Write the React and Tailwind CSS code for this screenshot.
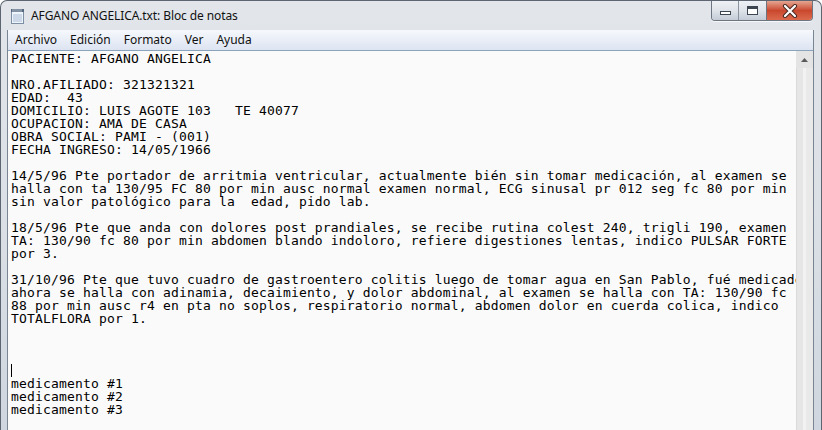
import React from 'react';

const lines = [
  'PACIENTE: AFGANO ANGELICA',
  '',
  'NRO.AFILIADO: 321321321',
  'EDAD:  43',
  'DOMICILIO: LUIS AGOTE 103   TE 40077',
  'OCUPACION: AMA DE CASA',
  'OBRA SOCIAL: PAMI - (001)',
  'FECHA INGRESO: 14/05/1966',
  '',
  '14/5/96 Pte portador de arritmia ventricular, actualmente bién sin tomar medicación, al examen se',
  'halla con ta 130/95 FC 80 por min ausc normal examen normal, ECG sinusal pr 012 seg fc 80 por min',
  'sin valor patológico para la  edad, pido lab.',
  '',
  '18/5/96 Pte que anda con dolores post prandiales, se recibe rutina colest 240, trigli 190, examen',
  'TA: 130/90 fc 80 por min abdomen blando indoloro, refiere digestiones lentas, indico PULSAR FORTE',
  'por 3.',
  '',
  '31/10/96 Pte que tuvo cuadro de gastroentero colitis luego de tomar agua en San Pablo, fué medicado',
  'ahora se halla con adinamia, decaimiento, y dolor abdominal, al examen se halla con TA: 130/90 fc',
  '88 por min ausc r4 en pta no soplos, respiratorio normal, abdomen dolor en cuerda colica, indico',
  'TOTALFLORA por 1.',
  '',
  '',
  '',
];

const after = ['medicamento #1', 'medicamento #2', 'medicamento #3'];

const menus = ['Archivo', 'Edición', 'Formato', 'Ver', 'Ayuda'];

function NotepadIcon() {
  return (
    <svg width="15" height="16" viewBox="0 0 15 16">
      <rect x="1.5" y="2.5" width="12" height="13" fill="#eef4fb" stroke="#7d8fa3" />
      <rect x="1" y="1" width="13" height="3" fill="#55687d" />
      <path d="M3 1v3M5 1v3M7 1v3M9 1v3M11 1v3" stroke="#c9d4e0" strokeWidth="0.8" />
      <path d="M3 7h9M3 9h9M3 11h9M3 13h9" stroke="#a9bcd3" strokeWidth="1" />
    </svg>
  );
}

function CaptionButtons() {
  return (
    <div className="flex h-[20px] mr-[8px] rounded-b-[4px] border border-t-0 border-[#6d7680] overflow-hidden shadow-[0_1px_0_rgba(255,255,255,0.7)]">
      <div className="w-[27px] h-full flex items-end justify-center pb-[5px] bg-gradient-to-b from-[#eef1f5] via-[#dfe4ea] to-[#c4ccd6] border-r border-[#8a939e]">
        <div className="w-[11px] h-[4px] bg-white border border-[#3d4550]" />
      </div>
      <div className="w-[28px] h-full flex items-center justify-center bg-gradient-to-b from-[#eef1f5] via-[#dfe4ea] to-[#c4ccd6] border-r border-[#6d7680]">
        <div className="w-[11px] h-[9px] bg-white border border-[#3d4550] border-t-[3px] mb-[1px]" />
      </div>
      <div className="w-[45px] h-full flex items-center justify-center bg-gradient-to-b from-[#e4a592] via-[#c9472d] to-[#dc6a4d]">
        <svg width="16" height="14" viewBox="0 0 16 14">
          <path d="M3 2l10 10M13 2L3 12" stroke="#4a2a22" strokeWidth="4.2" strokeLinecap="round" />
          <path d="M3 2l10 10M13 2L3 12" stroke="#ffffff" strokeWidth="2.2" strokeLinecap="round" />
        </svg>
      </div>
    </div>
  );
}

function Scrollbar() {
  return (
    <div className="w-[17px] shrink-0 flex flex-col bg-[#e4e4e4]">
      <div className="h-[17px] flex items-center justify-center pt-[1px]">
        <svg width="7" height="4" viewBox="0 0 7 4">
          <path d="M0 4L3.5 0L7 4Z" fill="#5a5a5a" />
        </svg>
      </div>
      <div className="flex-1 flex">
        <div className="w-[1px] bg-[#dadada]" />
        <div className="w-[6px] bg-[#e6e6e6]" />
        <div className="w-[3px] bg-[#f2f2f2]" />
        <div className="flex-1 bg-[#e9e9e9]" />
      </div>
    </div>
  );
}

export default function App() {
  return (
    <div
      className="w-[822px] h-[430px] overflow-hidden flex flex-col rounded-t-[7px] border border-b-0 border-[#5d6670] bg-gradient-to-b from-[#e2e6eb] via-[#dbe0e6] to-[#cfd6df]"
      style={{ fontFamily: '"Noto Sans", "Open Sans", sans-serif' }}
    >
      <div className="h-[29px] shrink-0 flex items-start">
        <div className="flex items-center pl-[9px] pt-[7px]">
          <NotepadIcon />
          <span className="ml-[6px] text-[12px] text-[#111] leading-[16px] tracking-[-0.1px]">
            AFGANO ANGELICA.txt: Bloc de notas
          </span>
        </div>
        <div className="ml-auto">
          <CaptionButtons />
        </div>
      </div>

      <div className="flex-1 flex min-h-0 pl-[6px] pr-[7px]">
        <div className="flex-1 min-w-0 flex flex-col min-h-0 border-l border-r border-[#7a8593]">
          <div className="h-[20px] shrink-0 flex items-center pl-[7px] gap-[13px] bg-gradient-to-b from-[#f6f8fc] via-[#e9eef7] to-[#dde4f1] text-[12px] text-[#111]">
            {menus.map((m) => (
              <span key={m} className="leading-[16px]">{m}</span>
            ))}
          </div>
          <div className="flex-1 flex min-h-0 min-w-0 border-t border-[#8aa4be] bg-[#fafafa]">
            <div
              className="flex-1 min-w-0 overflow-hidden pt-[1px] pl-[3px] text-[13px] leading-[13px] tracking-[0.17px] text-black whitespace-pre"
              style={{ fontFamily: '"DejaVu Sans Mono", monospace' }}
            >
              {lines.map((l, i) => (
                <div key={i} className="h-[13px]">{l}</div>
              ))}
              <div className="h-[13px] flex items-center">
                <div className="w-[1px] h-[13px] bg-black" />
              </div>
              {after.map((l) => (
                <div key={l} className="h-[13px]">{l}</div>
              ))}
            </div>
            <Scrollbar />
          </div>
        </div>
      </div>
    </div>
  );
}
